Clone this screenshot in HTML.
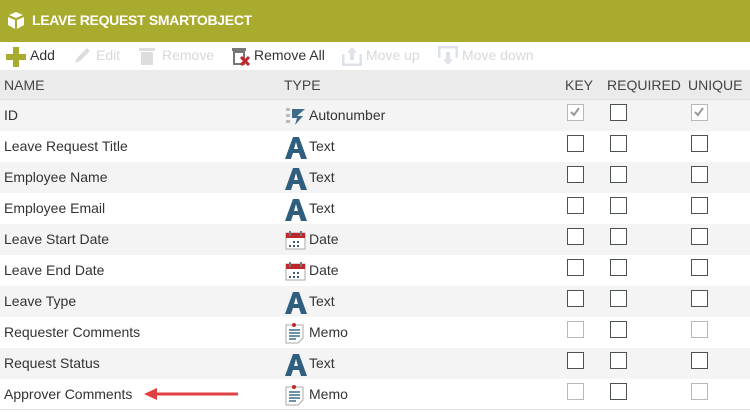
<!DOCTYPE html>
<html><head><style>
*{margin:0;padding:0;box-sizing:border-box}
body{width:750px;height:412px;overflow:hidden;background:#fff;font-family:"Liberation Sans",sans-serif;font-size:14px;color:#333}
.hdr{position:absolute;left:0;top:0;width:750px;height:42px;background:#a8ab2e;color:#fff;font-weight:bold;font-size:14px}
.hdr span{position:absolute;left:32px;top:12px;letter-spacing:-0.3px}
.tb{position:absolute;top:42px;left:0;width:750px;height:28px;background:#fff;font-size:14px}
.tb span{position:absolute;top:5px}
.dis{color:#d8d8d8}
.th{position:absolute;top:70px;left:0;width:750px;height:30px;background:#ebebeb;border-bottom:1px solid #e0e0e0;color:#444}
.th span{position:absolute;top:7px}
.row{position:absolute;left:0;width:750px;height:31px}
.row.g{background:#f4f4f4}
.row .n{position:absolute;left:4px;top:7px;color:#333}
.row .t{position:absolute;left:309px;top:7px}
.row .ic{position:absolute;left:285px;top:6px}
.cb{position:absolute;top:4px;width:17px;height:17px;border:1.5px solid #4a5350;background:#fff}
.cb.d{border-color:#b8b8b8}
.k{left:567px}.r{left:610px}.u{left:691px}
</style></head><body>
<div class="hdr">
<svg style="position:absolute;left:7px;top:12px" width="18" height="17" viewBox="0 0 18 17"><path d="M2 3 L9 0 L16 3 L9 6Z" fill="#fff"/><path d="M1 5 L8 8 L8 17 L1 13Z" fill="#fff"/><path d="M17 5 L10 8 L10 17 L17 13Z" fill="#fff"/></svg>
<span>LEAVE REQUEST SMARTOBJECT</span></div>
<div class="tb">
<svg style="position:absolute;left:6px;top:5px" width="20" height="20"><rect x="7" y="0" width="6" height="20" fill="#a8ab2e"/><rect x="0" y="7" width="20" height="6" fill="#a8ab2e"/></svg>
<span style="left:30px">Add</span>
<svg style="position:absolute;left:73px;top:5px" width="18" height="18"><path d="M2 16 L4 11 L14 1 L17 4 L7 14Z" fill="#ddd"/></svg>
<span class="dis" style="left:96px">Edit</span>
<svg style="position:absolute;left:139px;top:5px" width="16" height="18"><rect x="0" y="1" width="16" height="3" fill="#ddd"/><rect x="2" y="5" width="12" height="13" fill="#ddd"/></svg>
<span class="dis" style="left:162px">Remove</span>
<svg style="position:absolute;left:231px;top:4px" width="20" height="20"><rect x="1" y="2" width="14" height="3" fill="#777"/><rect x="3" y="6" width="10" height="12" fill="none" stroke="#777" stroke-width="2"/><path d="M10 11 L18 19 M18 11 L10 19" stroke="#c0272d" stroke-width="3"/></svg>
<span style="left:254px">Remove All</span>
<svg style="position:absolute;left:342px;top:4px" width="20" height="20"><path d="M1 8 V19 H19 V8" fill="none" stroke="#dde3e8" stroke-width="3"/><path d="M10 1 L5 7 H8 V14 H12 V7 H15Z" fill="#dde3e8"/></svg>
<span class="dis" style="left:366px">Move up</span>
<svg style="position:absolute;left:438px;top:4px" width="20" height="20"><path d="M1 12 V1 H19 V12" fill="none" stroke="#dde3e8" stroke-width="3"/><path d="M10 19 L5 13 H8 V6 H12 V13 H15Z" fill="#dde3e8"/></svg>
<span class="dis" style="left:462px">Move down</span>
</div>
<div class="th"><span style="left:4px">NAME</span><span style="left:284px">TYPE</span><span style="left:565px">KEY</span><span style="left:607px">REQUIRED</span><span style="left:688px">UNIQUE</span></div>

<div class="row g" style="top:100px"><span class="n">ID</span>
<svg class="ic" width="22" height="20"><g fill="#bbb"><rect x="1" y="2" width="4" height="3"/><rect x="1" y="8" width="4" height="3"/><rect x="1" y="14" width="4" height="3"/></g><path d="M7 3 H20 L12 10 H18 L10 19 L12 12 H7Z" fill="#3d6d8a"/></svg>
<span class="t">Autonumber</span>
<div class="cb k d"><svg width="14" height="14" style="position:absolute;left:0;top:0"><path d="M3 7 L6 10 L11 3" stroke="#999" stroke-width="2" fill="none"/></svg></div><div class="cb r"></div><div class="cb u d"><svg width="14" height="14" style="position:absolute;left:0;top:0"><path d="M3 7 L6 10 L11 3" stroke="#999" stroke-width="2" fill="none"/></svg></div></div>

<div class="row" style="top:131px"><span class="n">Leave Request Title</span><svg class="ic" width="22" height="22"><path d="M0 22 L8 0 H14 L22 22 H16 L14 16 H8 L6 22Z M9 12 H13 L11 5Z" fill="#2f5e7f" fill-rule="evenodd"/></svg><span class="t">Text</span><div class="cb k"></div><div class="cb r"></div><div class="cb u"></div></div>
<div class="row g" style="top:162px"><span class="n">Employee Name</span><svg class="ic" width="22" height="22"><path d="M0 22 L8 0 H14 L22 22 H16 L14 16 H8 L6 22Z M9 12 H13 L11 5Z" fill="#2f5e7f" fill-rule="evenodd"/></svg><span class="t">Text</span><div class="cb k"></div><div class="cb r"></div><div class="cb u"></div></div>
<div class="row" style="top:193px"><span class="n">Employee Email</span><svg class="ic" width="22" height="22"><path d="M0 22 L8 0 H14 L22 22 H16 L14 16 H8 L6 22Z M9 12 H13 L11 5Z" fill="#2f5e7f" fill-rule="evenodd"/></svg><span class="t">Text</span><div class="cb k"></div><div class="cb r"></div><div class="cb u"></div></div>
<div class="row g" style="top:224px"><span class="n">Leave Start Date</span><svg class="ic" width="21" height="20"><rect x="1" y="3" width="19" height="16" fill="#fff" stroke="#aaa"/><rect x="1" y="3" width="19" height="5" fill="#c0272d"/><rect x="4" y="1" width="2" height="5" fill="#777"/><rect x="15" y="1" width="2" height="5" fill="#777"/><g fill="#3d5f7a"><rect x="8" y="11" width="2" height="2"/><rect x="12" y="11" width="2" height="2"/><rect x="4" y="15" width="2" height="2"/><rect x="8" y="15" width="2" height="2"/><rect x="12" y="15" width="2" height="2"/></g></svg><span class="t">Date</span><div class="cb k"></div><div class="cb r"></div><div class="cb u"></div></div>
<div class="row" style="top:255px"><span class="n">Leave End Date</span><svg class="ic" width="21" height="20"><rect x="1" y="3" width="19" height="16" fill="#fff" stroke="#aaa"/><rect x="1" y="3" width="19" height="5" fill="#c0272d"/><rect x="4" y="1" width="2" height="5" fill="#777"/><rect x="15" y="1" width="2" height="5" fill="#777"/><g fill="#3d5f7a"><rect x="8" y="11" width="2" height="2"/><rect x="12" y="11" width="2" height="2"/><rect x="4" y="15" width="2" height="2"/><rect x="8" y="15" width="2" height="2"/><rect x="12" y="15" width="2" height="2"/></g></svg><span class="t">Date</span><div class="cb k"></div><div class="cb r"></div><div class="cb u"></div></div>
<div class="row g" style="top:286px"><span class="n">Leave Type</span><svg class="ic" width="22" height="22"><path d="M0 22 L8 0 H14 L22 22 H16 L14 16 H8 L6 22Z M9 12 H13 L11 5Z" fill="#2f5e7f" fill-rule="evenodd"/></svg><span class="t">Text</span><div class="cb k"></div><div class="cb r"></div><div class="cb u"></div></div>
<div class="row" style="top:317px"><span class="n">Requester Comments</span><svg class="ic" width="20" height="21"><path d="M1 2 H18 V15 L13 20 H1Z" fill="#fff" stroke="#aaa"/><circle cx="9" cy="2" r="2" fill="#c0272d"/><g stroke="#3d6d8a" stroke-width="1.5"><path d="M4 7 H15 M4 10 H15 M4 13 H15 M4 16 H11"/></g></svg><span class="t">Memo</span><div class="cb k d"></div><div class="cb r"></div><div class="cb u d"></div></div>
<div class="row g" style="top:348px"><span class="n">Request Status</span><svg class="ic" width="22" height="22"><path d="M0 22 L8 0 H14 L22 22 H16 L14 16 H8 L6 22Z M9 12 H13 L11 5Z" fill="#2f5e7f" fill-rule="evenodd"/></svg><span class="t">Text</span><div class="cb k"></div><div class="cb r"></div><div class="cb u"></div></div>
<div class="row" style="top:379px;border-bottom:1px solid #e0e0e0"><span class="n">Approver Comments</span>
<svg style="position:absolute;left:144px;top:8px" width="95" height="14"><path d="M10 7 H94" stroke="#e04040" stroke-width="3"/><path d="M0 7 L13 1 V13Z" fill="#e04040"/></svg>
<svg class="ic" width="20" height="21"><path d="M1 2 H18 V15 L13 20 H1Z" fill="#fff" stroke="#aaa"/><circle cx="9" cy="2" r="2" fill="#c0272d"/><g stroke="#3d6d8a" stroke-width="1.5"><path d="M4 7 H15 M4 10 H15 M4 13 H15 M4 16 H11"/></g></svg><span class="t">Memo</span><div class="cb k d"></div><div class="cb r"></div><div class="cb u d"></div></div>
</body></html>
